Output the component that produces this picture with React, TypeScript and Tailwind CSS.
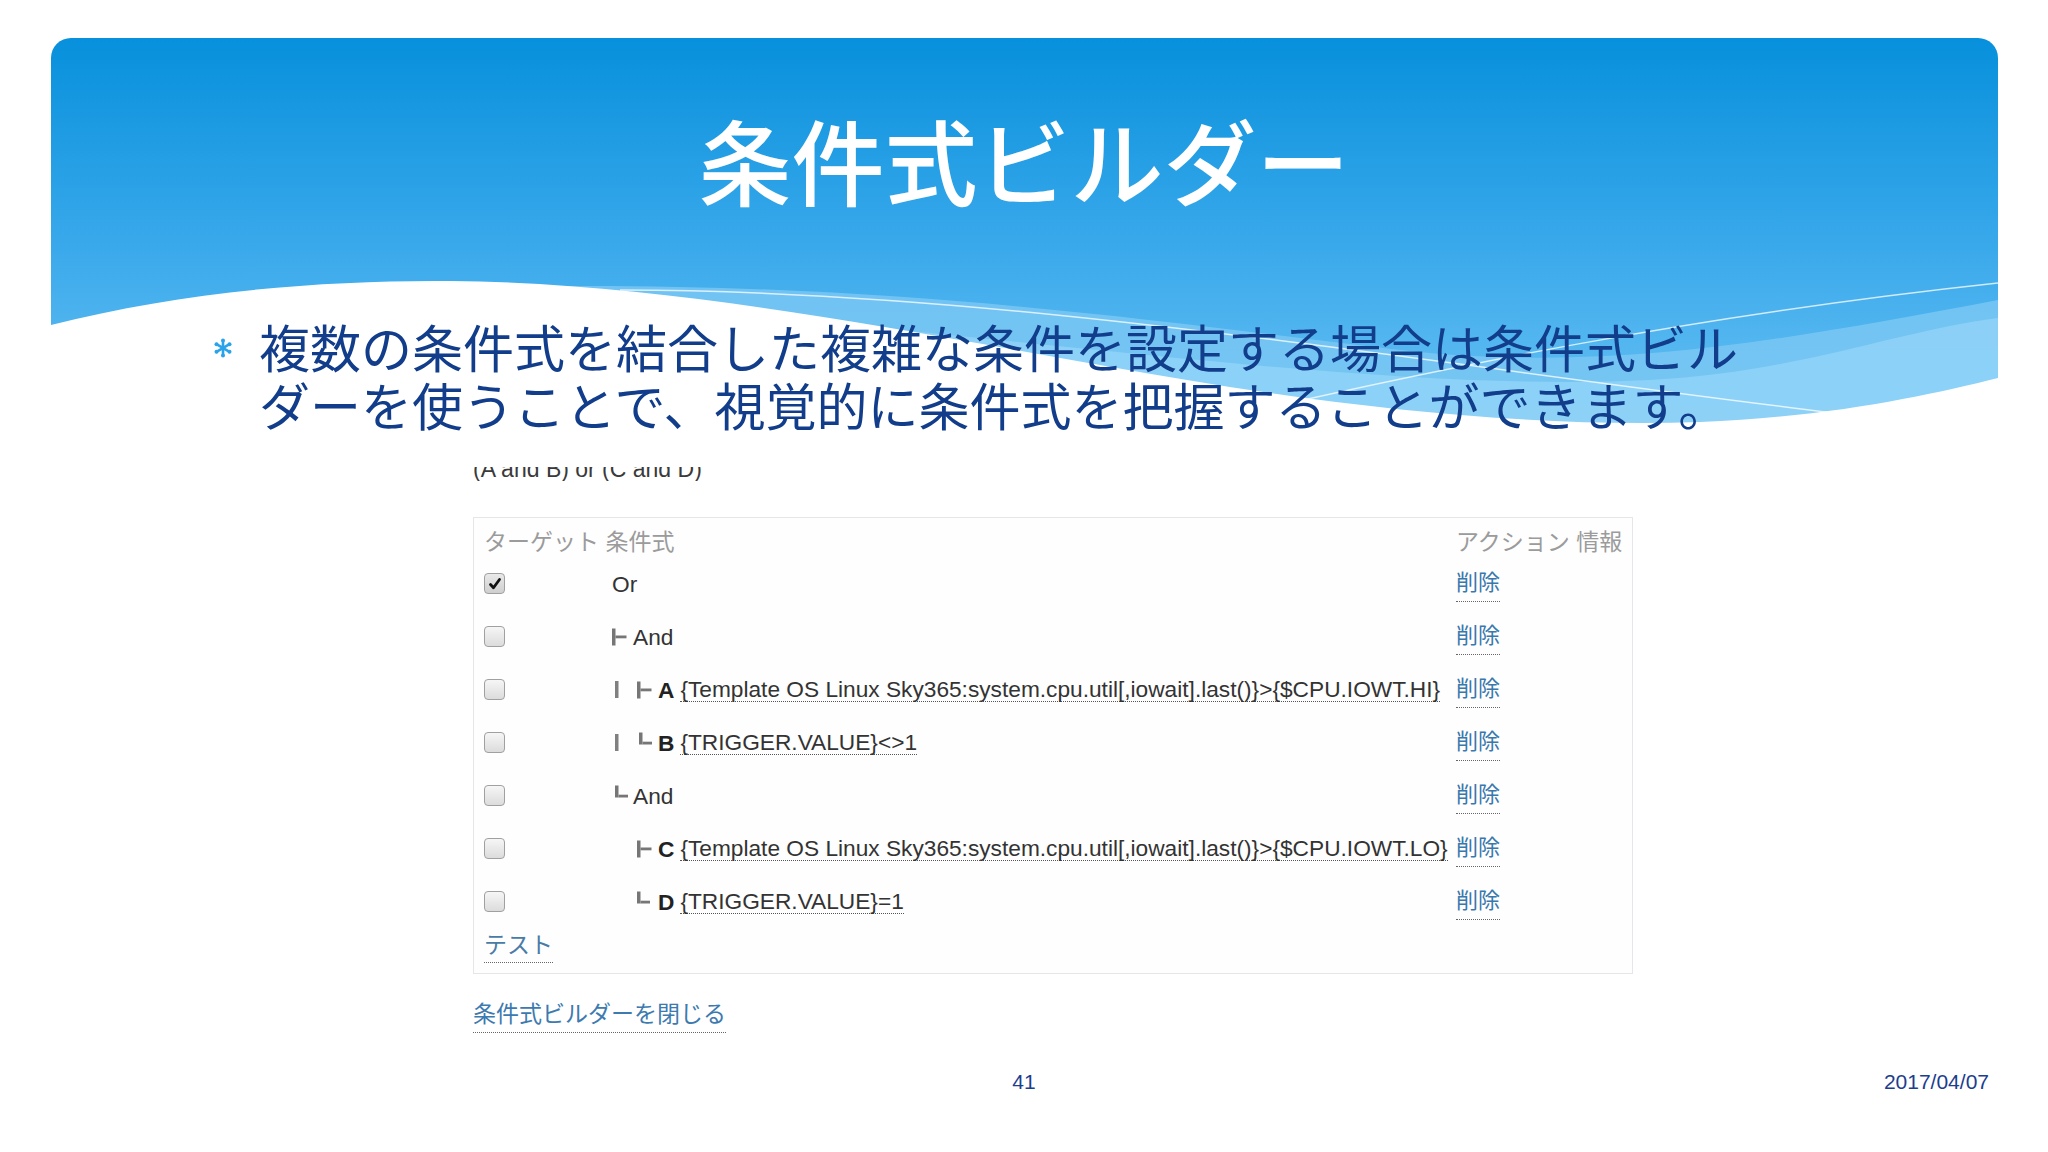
import React from 'react';

type Conn = { kind: 'pipe' | 'tee' | 'elbow' | 'space'; w: number; x: number };

type Row = {
    checked?: boolean;
    conns: Conn[];
    op?: string;
    letter?: string;
    expr?: string;
};

const rows: Row[] = [
    { checked: true, conns: [], op: 'Or' },
    { conns: [{ kind: 'tee', w: 21, x: 0 }], op: 'And' },
    {
        conns: [{ kind: 'pipe', w: 24, x: 3 }, { kind: 'tee', w: 22, x: 1 }],
        letter: 'A',
        expr: '{Template OS Linux Sky365:system.cpu.util[,iowait].last()}>{$CPU.IOWT.HI}',
    },
    {
        conns: [{ kind: 'pipe', w: 24, x: 3 }, { kind: 'elbow', w: 22, x: 3 }],
        letter: 'B',
        expr: '{TRIGGER.VALUE}<>1',
    },
    { conns: [{ kind: 'elbow', w: 21, x: 3 }], op: 'And' },
    {
        conns: [{ kind: 'space', w: 24, x: 0 }, { kind: 'tee', w: 22, x: 1 }],
        letter: 'C',
        expr: '{Template OS Linux Sky365:system.cpu.util[,iowait].last()}>{$CPU.IOWT.LO}',
    },
    {
        conns: [{ kind: 'space', w: 24, x: 0 }, { kind: 'elbow', w: 22, x: 1 }],
        letter: 'D',
        expr: '{TRIGGER.VALUE}=1',
    },
];

// tree connector glyphs (├ └ |) drawn small, like the zabbix screen
function Connector({ c }: { c: Conn }) {
    if (c.kind === 'space') return <span className="inline-block w-[24px] shrink-0" />;
    return (
        <svg width={c.w} height="22" viewBox={`0 0 ${c.w} 22`} className="shrink-0">
            {c.kind === 'pipe' && <rect x={c.x} y="2" width="3.5" height="17" fill="#808080" />}
            {c.kind === 'tee' && (
                <>
                    <rect x={c.x} y="2.5" width="3.5" height="17" fill="#767676" />
                    <rect x={c.x + 3.5} y="9.5" width="11" height="2.8" fill="#767676" />
                </>
            )}
            {c.kind === 'elbow' && (
                <>
                    <rect x={c.x} y="0.5" width="3.5" height="12" fill="#767676" />
                    <rect x={c.x + 3.5} y="9.7" width="9.5" height="2.8" fill="#767676" />
                </>
            )}
        </svg>
    );
}

function Checkbox({ checked }: { checked?: boolean }) {
    return (
        <span
            className={`flex h-[21px] w-[21px] items-center justify-center rounded-[4px] border border-[#a0a0a0] bg-gradient-to-b ${
                checked ? 'from-[#e9e9e9] to-[#cfcfcf]' : 'from-[#f6f6f6] to-[#dcdcdc]'
            }`}
        >
            {checked && (
                <svg width="14" height="14" viewBox="0 0 14 14">
                    <path d="M2.5 7.5 L5.5 10.8 L11.5 2.5" fill="none" stroke="#111" strokeWidth="2.8" strokeLinecap="round" strokeLinejoin="round" />
                </svg>
            )}
        </span>
    );
}

function Asterisk() {
    return (
        <svg width="20" height="20" viewBox="0 0 20 20">
            <g stroke="#2aa3ea" strokeWidth="2.6" strokeLinecap="round">
                <line x1="10" y1="2.5" x2="10" y2="17.5" />
                <line x1="3.5" y1="6.2" x2="16.5" y2="13.8" />
                <line x1="3.5" y1="13.8" x2="16.5" y2="6.2" />
            </g>
            <g fill="#2aa3ea">
                <circle cx="10" cy="2.5" r="2" />
                <circle cx="10" cy="17.5" r="2" />
                <circle cx="3.5" cy="6.2" r="2" />
                <circle cx="16.5" cy="13.8" r="2" />
                <circle cx="3.5" cy="13.8" r="2" />
                <circle cx="16.5" cy="6.2" r="2" />
            </g>
        </svg>
    );
}

function HeaderBackground() {
    return (
        <svg className="absolute inset-0" width="2048" height="1152" viewBox="0 0 2048 1152">
            <defs>
                <linearGradient id="hdr" x1="0" y1="38" x2="0" y2="420" gradientUnits="userSpaceOnUse">
                    <stop offset="0" stopColor="#0790dc" />
                    <stop offset="0.55" stopColor="#3aa9eb" />
                    <stop offset="1" stopColor="#66c0f3" />
                </linearGradient>
                <clipPath id="hdrclip">
                    <rect x="51" y="38" width="1947" height="600" rx="20" />
                </clipPath>
            </defs>
            <g clipPath="url(#hdrclip)">
                <rect x="51" y="38" width="1947" height="402" fill="url(#hdr)" />
                <path
                    d="M560 286 C 900 284, 1150 320, 1400 350 C 1600 372, 1760 345, 1998 300 L 1998 440 L 560 440 Z"
                    fill="#7cc8f4"
                    opacity="0.8"
                />
                <path
                    d="M900 330 C 1200 360, 1450 390, 1650 380 C 1800 372, 1900 330, 1998 318 L 1998 440 L 900 440 Z"
                    fill="#92d3f8"
                    opacity="0.8"
                />
                <path
                    d="M51 325 C 180 292, 320 280, 450 281 C 650 283, 850 320, 1100 365 C 1320 405, 1520 428, 1700 422 C 1830 417, 1930 395, 1998 378 L 2010 378 L 2010 480 L 40 480 L 40 325 Z"
                    fill="#ffffff"
                />
                <path d="M620 290 C 1000 290, 1400 360, 1834 413" fill="none" stroke="#ffffff" strokeOpacity="0.75" strokeWidth="1.5" />
                <path d="M1180 428 C 1450 365, 1700 315, 1998 283" fill="none" stroke="#ffffff" strokeOpacity="0.75" strokeWidth="1.5" />
            </g>
        </svg>
    );
}

export default function App() {
    return (
        <div className="relative h-[1152px] w-[2048px] overflow-hidden bg-white">
            <HeaderBackground />

            <div className="relative flex flex-col">
                {/* title */}
                <h1 className="mt-[113px] text-center font-['Noto_Sans_CJK_JP',sans-serif] text-[93px] font-medium leading-[92px] text-white">
                    条件式ビルダー
                </h1>

                {/* bullet */}
                <div className="mt-[112px] flex pl-[213px] font-['Noto_Sans_CJK_JP',sans-serif] text-[51px] leading-[58px] text-[#113d8b]">
                    <div className="flex h-[58px] w-[20px] shrink-0 items-center pt-[3px]">
                        <Asterisk />
                    </div>
                    <p className="ml-[26px] whitespace-nowrap">
                        複数の条件式を結合した複雑な条件を設定する場合は条件式ビル
                        <br />
                        ダーを使うことで、視覚的に条件式を把握することができます。
                    </p>
                </div>

                {/* screenshot of the builder */}
                <div className="ml-[473px] w-[1160px] font-['Liberation_Sans','Noto_Sans_CJK_JP',sans-serif] text-[22.7px] text-[#333]">
                    <div className="mt-[34px] h-[14px] overflow-hidden">
                        <div className="-mt-[11px] text-[23px] leading-[26px] text-[#3a3a3a]">(A and B) or (C and D)</div>
                    </div>

                    <div className="mt-[36px] h-[457px] border border-[#e6e6ea] bg-[#fefefe] pl-[10px]">
                        <div className="flex h-[39px] items-center pt-[9px] text-[23px] text-[#9b9b9b]">
                            <div className="w-[972px]">ターゲット 条件式</div>
                            <div>アクション 情報</div>
                        </div>

                        {rows.map((r, i) => (
                            <div key={i} className="flex h-[53px] items-center">
                                <div className="w-[128px] shrink-0">
                                    <Checkbox checked={r.checked} />
                                </div>
                                <div className="flex w-[844px] shrink-0 items-center">
                                    {r.conns.map((c, j) => (
                                        <Connector key={j} c={c} />
                                    ))}
                                    {r.op && <span className="leading-[22px]">{r.op}</span>}
                                    {r.letter && <span className="font-bold leading-[22px] text-[#222]">{r.letter}</span>}
                                    {r.expr && (
                                        <span className="ml-[6px] whitespace-nowrap border-b border-dotted border-[#555] pb-[1px] leading-[22px]">
                                            {r.expr}
                                        </span>
                                    )}
                                </div>
                                <div>
                                    <span className="inline-block border-b border-dotted border-[#666] pb-[6px] text-[22px] leading-[24px] text-[#3978ad]">
                                        削除
                                    </span>
                                </div>
                            </div>
                        ))}

                        <div>
                            <span className="inline-block border-b border-dotted border-[#666] pb-[5px] text-[23px] leading-[24px] text-[#4a7ba7]">
                                テスト
                            </span>
                        </div>
                    </div>

                    <div className="mt-[23px]">
                        <span className="inline-block border-b border-dotted border-[#666] pb-[6px] text-[23px] leading-[24px] text-[#3d7ab0]">
                            条件式ビルダーを閉じる
                        </span>
                    </div>
                </div>

                {/* footer */}
                <div className="mt-[37px] grid grid-cols-3 font-['Liberation_Sans',sans-serif] text-[21px] leading-[24px] text-[#1b3e8e]">
                    <div />
                    <div className="text-center">41</div>
                    <div className="pr-[59px] text-right">2017/04/07</div>
                </div>
            </div>
        </div>
    );
}
